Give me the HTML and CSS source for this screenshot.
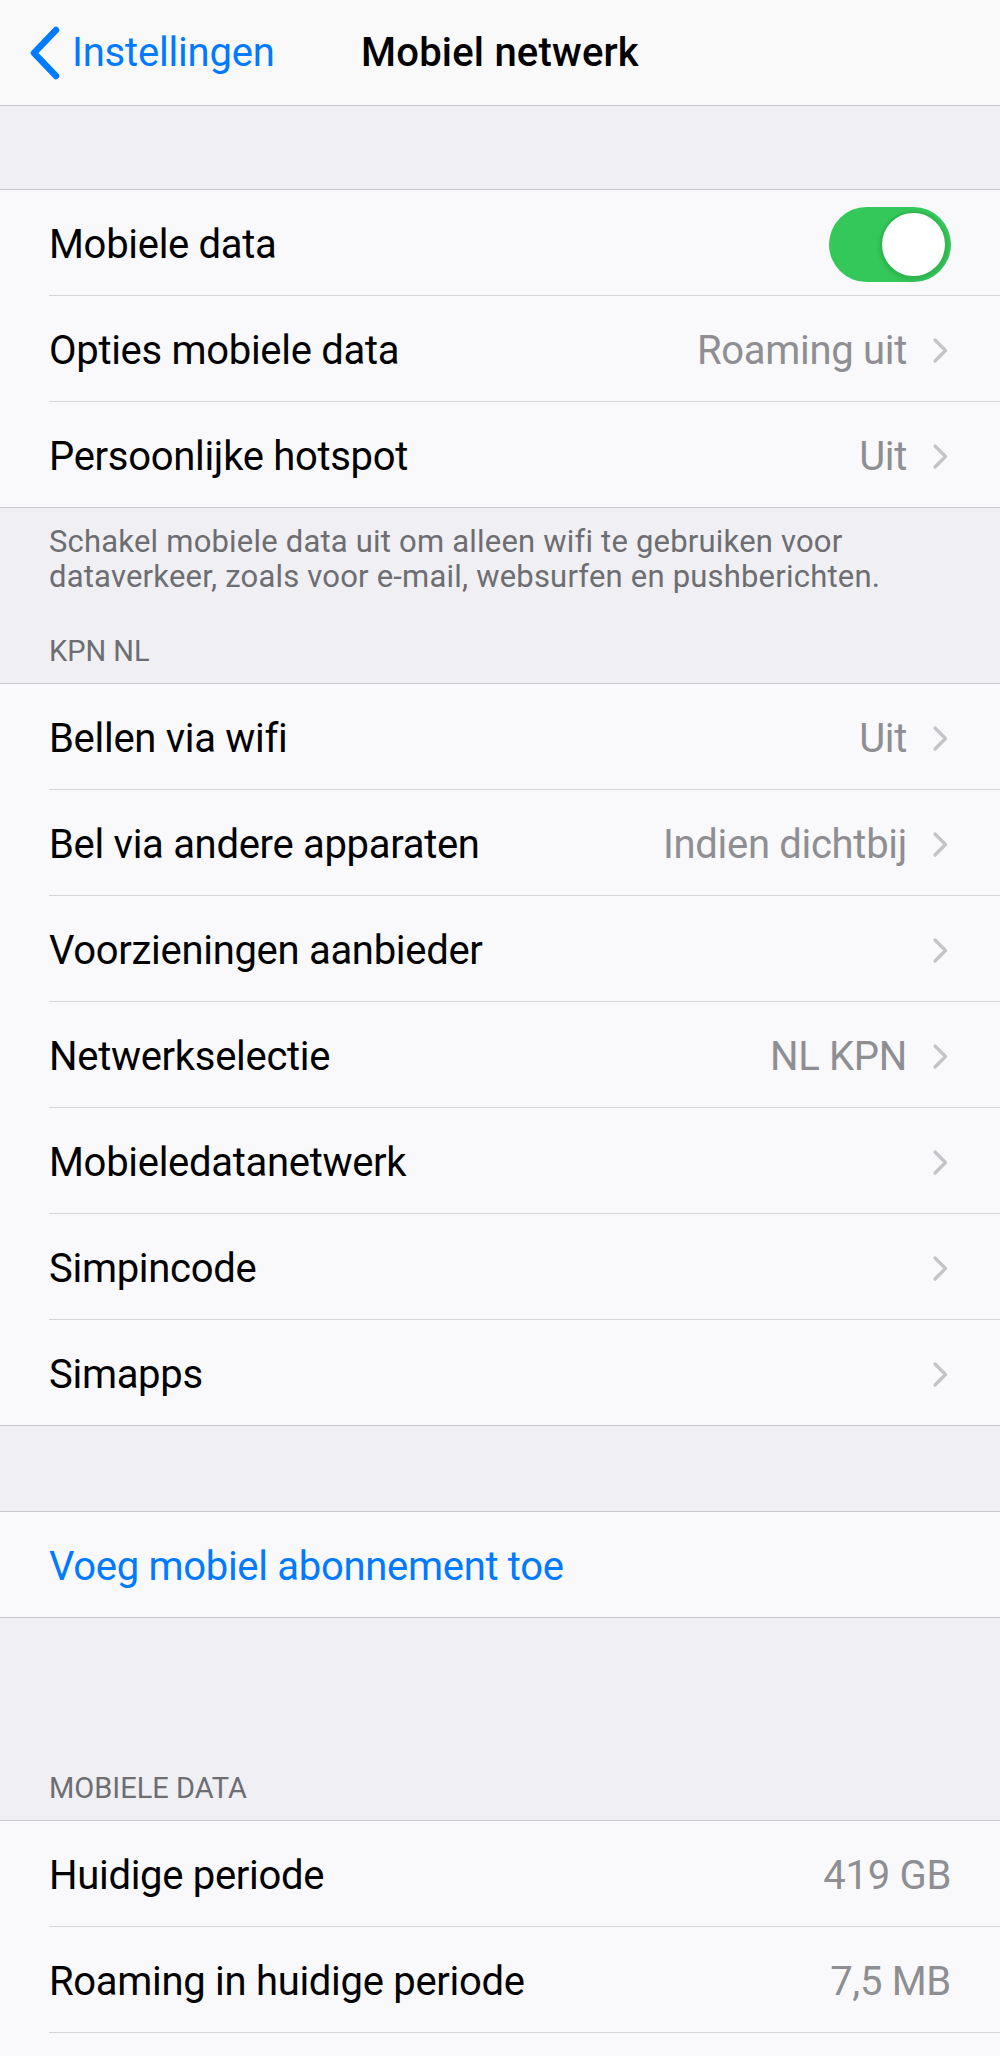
FILE: index.html
```html
<!DOCTYPE html>
<html lang="nl">
<head>
<meta charset="utf-8">
<title>Mobiel netwerk</title>
<link rel="stylesheet" href="styles.css">
</head>
<body>
<div class="screen">
  <header class="navbar">
    <div class="back">
      <svg class="back-icon" width="34" height="54" viewBox="0 0 34 54"><path d="M28 4 L6 27 L28 50" fill="none" stroke="#007aff" stroke-width="6.5" stroke-linecap="round" stroke-linejoin="round"/></svg>
      <span class="back-label">Instellingen</span>
    </div>
    <div class="title">Mobiel netwerk</div>
    <div></div>
  </header>

  <section class="group first">
    <div class="row">
      <span class="label">Mobiele data</span>
      <span class="switch"><span class="knob"></span></span>
    </div>
    <div class="row">
      <span class="label">Opties mobiele data</span>
      <span class="value">Roaming uit</span>
      <svg class="chev" width="17" height="27" viewBox="0 0 17 27"><path d="M3 3 L13.5 13.5 L3 24" fill="none" stroke="#c4c4c8" stroke-width="3.2" stroke-linecap="round" stroke-linejoin="round"/></svg>
    </div>
    <div class="row">
      <span class="label">Persoonlijke hotspot</span>
      <span class="value">Uit</span>
      <svg class="chev" width="17" height="27" viewBox="0 0 17 27"><path d="M3 3 L13.5 13.5 L3 24" fill="none" stroke="#c4c4c8" stroke-width="3.2" stroke-linecap="round" stroke-linejoin="round"/></svg>
    </div>
  </section>
  <p class="footer">Schakel mobiele data uit om alleen wifi te gebruiken voor dataverkeer, zoals voor e-mail, websurfen en pushberichten.</p>

  <h2 class="section-header kpn">KPN NL</h2>
  <section class="group">
    <div class="row">
      <span class="label">Bellen via wifi</span>
      <span class="value">Uit</span>
      <svg class="chev" width="17" height="27" viewBox="0 0 17 27"><path d="M3 3 L13.5 13.5 L3 24" fill="none" stroke="#c4c4c8" stroke-width="3.2" stroke-linecap="round" stroke-linejoin="round"/></svg>
    </div>
    <div class="row">
      <span class="label">Bel via andere apparaten</span>
      <span class="value">Indien dichtbij</span>
      <svg class="chev" width="17" height="27" viewBox="0 0 17 27"><path d="M3 3 L13.5 13.5 L3 24" fill="none" stroke="#c4c4c8" stroke-width="3.2" stroke-linecap="round" stroke-linejoin="round"/></svg>
    </div>
    <div class="row">
      <span class="label">Voorzieningen aanbieder</span>
      <svg class="chev" width="17" height="27" viewBox="0 0 17 27"><path d="M3 3 L13.5 13.5 L3 24" fill="none" stroke="#c4c4c8" stroke-width="3.2" stroke-linecap="round" stroke-linejoin="round"/></svg>
    </div>
    <div class="row">
      <span class="label">Netwerkselectie</span>
      <span class="value">NL KPN</span>
      <svg class="chev" width="17" height="27" viewBox="0 0 17 27"><path d="M3 3 L13.5 13.5 L3 24" fill="none" stroke="#c4c4c8" stroke-width="3.2" stroke-linecap="round" stroke-linejoin="round"/></svg>
    </div>
    <div class="row">
      <span class="label">Mobieledatanetwerk</span>
      <svg class="chev" width="17" height="27" viewBox="0 0 17 27"><path d="M3 3 L13.5 13.5 L3 24" fill="none" stroke="#c4c4c8" stroke-width="3.2" stroke-linecap="round" stroke-linejoin="round"/></svg>
    </div>
    <div class="row">
      <span class="label">Simpincode</span>
      <svg class="chev" width="17" height="27" viewBox="0 0 17 27"><path d="M3 3 L13.5 13.5 L3 24" fill="none" stroke="#c4c4c8" stroke-width="3.2" stroke-linecap="round" stroke-linejoin="round"/></svg>
    </div>
    <div class="row">
      <span class="label">Simapps</span>
      <svg class="chev" width="17" height="27" viewBox="0 0 17 27"><path d="M3 3 L13.5 13.5 L3 24" fill="none" stroke="#c4c4c8" stroke-width="3.2" stroke-linecap="round" stroke-linejoin="round"/></svg>
    </div>
  </section>

  <section class="group add">
    <div class="row">
      <span class="label link">Voeg mobiel abonnement toe</span>
    </div>
  </section>

  <h2 class="section-header data">MOBIELE DATA</h2>
  <section class="group">
    <div class="row">
      <span class="label">Huidige periode</span>
      <span class="value">419 GB</span>
    </div>
    <div class="row">
      <span class="label">Roaming in huidige periode</span>
      <span class="value">7,5 MB</span>
    </div>
    <div class="row"></div>
  </section>
</div>
</body>
</html>
```

FILE: styles.css
```css
* { box-sizing: border-box; }

html, body {
  margin: 0;
  padding: 0;
  background: #efeff4;
}

body {
  font-family: Roboto, "Liberation Sans", Arial, sans-serif;
  color: #000;
  -webkit-font-smoothing: antialiased;
}

.screen {
  width: 1000px;
  min-height: 2056px;
  overflow: hidden;
}

.navbar {
  height: 106px;
  background: #f9f9fa;
  border-bottom: 1px solid #c9c9cd;
  display: grid;
  grid-template-columns: 1fr auto 1fr;
  align-items: center;
}

.back {
  display: flex;
  align-items: center;
  padding-left: 28px;
  gap: 10px;
  color: #007aff;
  font-size: 40px;
  letter-spacing: -0.2px;
}

.back-icon { display: block; }

.title {
  font-size: 40px;
  font-weight: 500;
  letter-spacing: 0.2px;
}

.group {
  background: #f9f9fb;
  border-top: 1px solid #c9c9cd;
  border-bottom: 1px solid #c9c9cd;
}

.group.first { margin-top: 83px; }
.group.add { margin-top: 85px; }

.row {
  height: 106px;
  display: flex;
  align-items: center;
  padding-top: 3px;
  margin-left: 49px;
  padding-right: 49px;
  border-bottom: 1px solid #d6d6da;
  font-size: 40px;
  letter-spacing: -0.3px;
}

.row:last-child { border-bottom: none; height: 105px; }

.label {
  flex: 1;
  white-space: nowrap;
}

.label.link { color: #007aff; }

.value {
  color: #8e8e93;
  white-space: nowrap;
}

.chev {
  display: block;
  margin-left: 25px;
  margin-right: 2px;
  flex: none;
}

.switch {
  position: relative;
  width: 122px;
  height: 75px;
  border-radius: 38px;
  background: #34c759;
  flex: none;
}

.knob {
  position: absolute;
  right: 4px;
  top: 4px;
  width: 67px;
  height: 67px;
  border-radius: 50%;
  background: #fff;
  border: 2px solid #2fb650;
  box-shadow: 0 2px 4px rgba(0,0,0,0.12);
}

.footer {
  margin: 0;
  padding: 16px 49px 0;
  font-size: 31px;
  line-height: 35px;
  letter-spacing: 0.2px;
  color: #6d6d72;
}

.section-header {
  margin: 0;
  font-weight: 400;
  font-size: 29px;
  line-height: 35px;
  color: #6d6d72;
  padding: 0 49px 14px;
}

.section-header.kpn { padding-top: 40px; }
.section-header.data { padding-top: 153px; }
```
